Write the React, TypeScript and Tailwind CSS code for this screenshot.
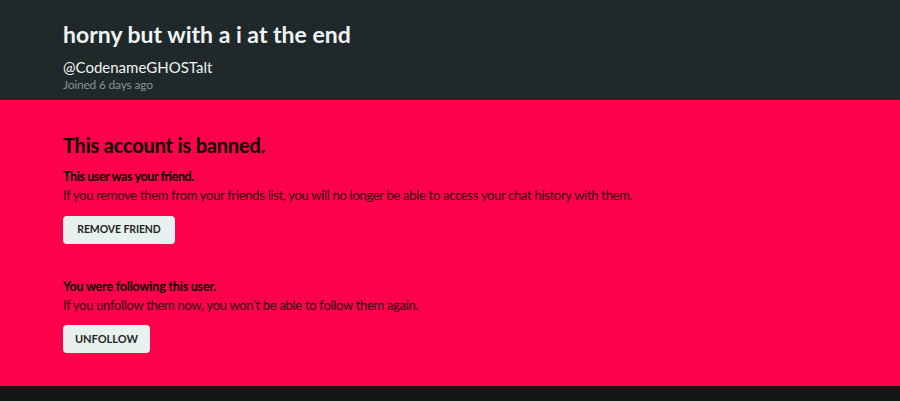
export default function App() {
  return (
    <div className="min-h-screen bg-[#131716] font-['Lato',sans-serif]">
      <header className="bg-[#212829] px-[63px] pt-[19px] pb-[9px] h-[100px]">
        <h1 className="text-[23px] leading-[30px] font-bold text-[#eef4f4]">horny but with a i at the end</h1>
        <p className="mt-[8px] text-[15px] leading-[20px] text-[#eef4f4]">@CodenameGHOSTalt</p>
        <p className="text-[12px] leading-[16px] text-[#8a9293] tracking-[-0.2px]">Joined 6 days ago</p>
      </header>

      <section className="bg-[#ff004c] px-[63px] pt-[32px] h-[286px]">
        <h2 className="text-[20px] leading-[26px] font-bold text-black tracking-[-0.2px]">This account is banned.</h2>

        <div className="mt-[10px]">
          <h3 className="text-[12.5px] leading-[17px] font-bold text-black tracking-[-0.4px]">This user was your friend.</h3>
          <p className="mt-[1px] text-[13px] leading-[18px] text-[#2b0010] tracking-[-0.3px]">
            If you remove them from your friends list, you will no longer be able to access your chat history with them.
          </p>
          <button className="mt-[12px] h-[28px] w-[112px] rounded-[4px] bg-[#e9f0f0] text-[10.5px] font-bold text-[#1e2526] tracking-[-0.1px]">
            REMOVE FRIEND
          </button>
        </div>

        <div className="mt-[34px]">
          <h3 className="text-[12.5px] leading-[17px] font-bold text-black tracking-[-0.2px]">You were following this user.</h3>
          <p className="mt-[1px] text-[13px] leading-[18px] text-[#2b0010] tracking-[-0.3px]">
            If you unfollow them now, you won't be able to follow them again.
          </p>
          <button className="mt-[11px] h-[28px] w-[87px] rounded-[4px] bg-[#e9f0f0] text-[11px] font-bold text-[#1e2526]">
            UNFOLLOW
          </button>
        </div>
      </section>
    </div>
  )
}
